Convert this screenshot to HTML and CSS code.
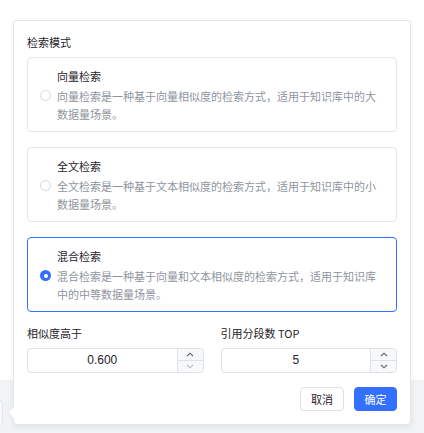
FILE: index.html
```html
<!DOCTYPE html>
<html lang="zh-CN">
<head>
<meta charset="utf-8">
<title>检索模式</title>
<link rel="stylesheet" href="styles.css">
</head>
<body>
<div class="page">
  <div class="page-top"></div>
  <div class="page-bottom">
    <div class="under-box"></div>
  </div>

  <div class="popover">
    <div class="arrow"></div>
    <div class="section-title">检索模式</div>

    <div class="options">
      <div class="option">
        <span class="radio"></span>
        <div class="option-text">
          <div class="option-title">向量检索</div>
          <div class="option-desc">向量检索是一种基于向量相似度的检索方式，适用于知识库中的大数据量场景。</div>
        </div>
      </div>
      <div class="option">
        <span class="radio"></span>
        <div class="option-text">
          <div class="option-title">全文检索</div>
          <div class="option-desc">全文检索是一种基于文本相似度的检索方式，适用于知识库中的小数据量场景。</div>
        </div>
      </div>
      <div class="option option-active">
        <span class="radio radio-checked"></span>
        <div class="option-text">
          <div class="option-title">混合检索</div>
          <div class="option-desc">混合检索是一种基于向量和文本相似度的检索方式，适用于知识库中的中等数据量场景。</div>
        </div>
      </div>
    </div>

    <div class="fields">
      <div class="field">
        <div class="field-label">相似度高于</div>
        <div class="number-input">
          <div class="number-value">0.600</div>
          <div class="stepper">
            <span class="step step-up"><svg width="8" height="5" viewBox="0 0 8 5"><path d="M1 4.2 L4 1.2 L7 4.2" fill="none" stroke="#4e5969" stroke-width="1.1"/></svg></span>
            <span class="step step-down"><svg width="8" height="5" viewBox="0 0 8 5"><path d="M1 0.8 L4 3.8 L7 0.8" fill="none" stroke="#b4b9c1" stroke-width="1.1"/></svg></span>
          </div>
        </div>
      </div>
      <div class="field">
        <div class="field-label">引用分段数 TOP</div>
        <div class="number-input">
          <div class="number-value">5</div>
          <div class="stepper">
            <span class="step step-up"><svg width="8" height="5" viewBox="0 0 8 5"><path d="M1 4.2 L4 1.2 L7 4.2" fill="none" stroke="#4e5969" stroke-width="1.1"/></svg></span>
            <span class="step step-down"><svg width="8" height="5" viewBox="0 0 8 5"><path d="M1 0.8 L4 3.8 L7 0.8" fill="none" stroke="#4e5969" stroke-width="1.1"/></svg></span>
          </div>
        </div>
      </div>
    </div>

    <div class="actions">
      <button class="btn btn-default">取消</button>
      <button class="btn btn-primary">确定</button>
    </div>
  </div>
</div>
</body>
</html>
```

FILE: styles.css
```css
* {
  box-sizing: border-box;
}

html, body {
  margin: 0;
  padding: 0;
  background: #ffffff;
}

body {
  font-family: "Noto Sans CJK SC", "Noto Sans", "Liberation Sans", sans-serif;
  font-size: 11px;
  color: #1f2329;
}

.page {
  position: relative;
  width: 424px;
  height: 433px;
  overflow: hidden;
  display: flex;
  flex-direction: column;
}

.page-top {
  height: 380px;
  background: #ffffff;
}

.page-bottom {
  flex: 1;
  background: #f2f3f5;
  position: relative;
}

.under-box {
  position: absolute;
  left: -8px;
  top: 20px;
  width: 11px;
  height: 25px;
  background: #f7f8fa;
  border: 1px solid #e5e6eb;
  border-radius: 3px;
}

.popover {
  position: absolute;
  left: 13px;
  top: 20px;
  width: 398px;
  height: 405px;
  background: #ffffff;
  border: 1px solid #e4e6eb;
  border-radius: 4px;
  box-shadow: 0 2px 6px rgba(31, 35, 41, 0.08);
  padding: 12px 13px 0 13px;
  display: flex;
  flex-direction: column;
}

.arrow {
  position: absolute;
  left: -5px;
  top: 387px;
  width: 9px;
  height: 9px;
  background: #ffffff;
  border-left: 1px solid #e4e6eb;
  border-bottom: 1px solid #e4e6eb;
  transform: rotate(45deg);
}

.section-title {
  line-height: 18px;
  color: #1f2329;
  margin-bottom: 6px;
}

.options {
  display: flex;
  flex-direction: column;
  gap: 15px;
}

.option {
  height: 75px;
  border: 1px solid #e4e6eb;
  border-radius: 4px;
  padding: 0 13px 0 12px;
  display: flex;
  align-items: center;
  gap: 6px;
}

.option-active {
  border-color: #3370ff;
}

.radio {
  flex: none;
  width: 11px;
  height: 11px;
  border-radius: 50%;
  border: 1px solid #d5d8de;
  background: #ffffff;
  margin-top: 2px;
}

.radio-checked {
  border: none;
  background: #3370ff;
  position: relative;
}

.radio-checked::after {
  content: "";
  position: absolute;
  left: 3.5px;
  top: 3.5px;
  width: 4px;
  height: 4px;
  border-radius: 50%;
  background: #ffffff;
}

.option-text {
  flex: 1;
  min-width: 0;
}

.option-title {
  line-height: 18px;
  color: #1f2329;
  margin-bottom: 2px;
}

.option-desc {
  line-height: 18px;
  color: #8f959e;
}

.fields {
  display: flex;
  gap: 17px;
  margin-top: 12px;
}

.field {
  flex: 1;
}

.field-label {
  line-height: 18px;
  color: #1f2329;
  margin-bottom: 6px;
}

.number-input {
  height: 25px;
  border: 1px solid #dee0e3;
  border-radius: 4px;
  display: flex;
  overflow: hidden;
}

.number-value {
  flex: 1;
  text-align: center;
  line-height: 23px;
  font-family: "Liberation Sans", "Noto Sans", sans-serif;
  font-size: 12px;
  color: #1f2329;
}

.stepper {
  width: 26px;
  border-left: 1px solid #dee0e3;
  display: flex;
  flex-direction: column;
  background: #f7f8fa;
}

.step {
  flex: 1;
  display: flex;
  align-items: center;
  justify-content: center;
}

.step-up {
  border-bottom: 1px solid #dee0e3;
}

.actions {
  display: flex;
  justify-content: flex-end;
  gap: 10px;
  margin-top: 14px;
}

.btn {
  height: 24px;
  width: 44px;
  padding: 0;
  border-radius: 4px;
  font-family: "Noto Sans CJK SC", sans-serif;
  font-size: 11px;
  line-height: 22px;
  cursor: pointer;
}

.btn-default {
  background: #ffffff;
  border: 1px solid #dee0e3;
  color: #1f2329;
}

.btn-primary {
  width: 43px;
  background: #3370ff;
  border: 1px solid #3370ff;
  color: #ffffff;
}
```
